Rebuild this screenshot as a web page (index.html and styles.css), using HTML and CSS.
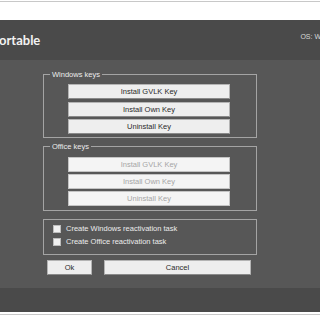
FILE: index.html
```html
<!DOCTYPE html>
<html>
<head>
<meta charset="utf-8">
<link rel="stylesheet" href="styles.css">
</head>
<body>
<div class="topbar"><div class="topline"></div></div>
<div class="header">
  <div class="title">ortable</div>
  <div class="os">OS: W</div>
</div>
<div class="main">
  <div class="group">
    <div class="group-title">Windows keys</div>
    <div class="btns">
      <div class="btn">Install GVLK Key</div>
      <div class="btn">Install Own Key</div>
      <div class="btn">Uninstall Key</div>
    </div>
  </div>
  <div class="group office">
    <div class="group-title">Office keys</div>
    <div class="btns">
      <div class="btn disabled">Install GVLK Key</div>
      <div class="btn disabled">Install Own Key</div>
      <div class="btn disabled">Uninstall Key</div>
    </div>
  </div>
  <div class="group checks">
    <div class="check"><span class="box"></span>Create Windows reactivation task</div>
    <div class="check"><span class="box"></span>Create Office reactivation task</div>
  </div>
  <div class="actions">
    <div class="btn ok">Ok</div>
    <div class="btn cancel">Cancel</div>
  </div>
</div>
<div class="footer"></div>
<div class="bottombar"><div class="bottomline"></div></div>
</body>
</html>
```
FILE: styles.css
```css
html, body {
  margin: 0;
  padding: 0;
  background: #ffffff;
  font-family: "Liberation Sans", Arial, sans-serif;
}
body {
  width: 320px;
  height: 320px;
  overflow: hidden;
}
.topbar {
  height: 20px;
  padding-top: 1px;
  box-sizing: border-box;
  background: #ffffff;
}
.topline {
  height: 1px;
  background: #c8c8c8;
}
.header {
  height: 40px;
  background: #4a4a4a;
  display: flex;
  justify-content: space-between;
  align-items: center;
  overflow: hidden;
}
.title {
  font-family: Lato, "Open Sans", sans-serif;
  font-weight: bold;
  font-size: 13px;
  color: #f2f2f2;
  padding-bottom: 1px;
  margin-left: -1px;
}
.os {
  font-size: 7px;
  color: #d8d8d8;
  white-space: nowrap;
  padding-bottom: 7px;
  margin-right: -1px;
}
.main {
  height: 228px;
  background: #575757;
  padding: 14px 0 0 43px;
  box-sizing: border-box;
}
.group {
  width: 214px;
  box-sizing: border-box;
  border: 1px solid #a4a4a4;
  margin-bottom: 8px;
  line-height: 9px;
}
.group-title {
  display: block;
  width: max-content;
  margin: -5px 0 0 6px;
  padding: 0 2px;
  height: 9px;
  line-height: 9px;
  font-size: 7.5px;
  color: #ececec;
  background: #575757;
}
.btns {
  display: flex;
  flex-direction: column;
  gap: 2.5px;
  padding: 5px 0 3px 24px;
}
.office .btns {
  padding: 6px 0 4px 24px;
  gap: 2px;
}
.btn {
  width: 162px;
  height: 15px;
  box-sizing: border-box;
  background: #eeeeee;
  border: 1px solid #b4b4b4;
  border-bottom-color: #8a8a8a;
  font-size: 7.5px;
  line-height: 13px;
  text-align: center;
  color: #2a2a2a;
}
.btn.disabled {
  background: #f4f4f4;
  color: #a6a6a6;
  border-color: #c4c4c4;
}
.checks {
  height: 36px;
  padding: 5px 0 0 9px;
  display: flex;
  flex-direction: column;
  gap: 5px;
  margin-bottom: 5px;
}
.check {
  display: flex;
  align-items: center;
  gap: 5px;
  font-size: 7.5px;
  color: #ececec;
  height: 8px;
  line-height: 8px;
}
.box {
  width: 8px;
  height: 8px;
  box-sizing: border-box;
  background: #f0f0f0;
  border: 1px solid #bdbdbd;
}
.actions {
  display: flex;
  gap: 12px;
  padding-left: 4px;
}
.btn.ok {
  width: 45px;
}
.btn.cancel {
  width: 147px;
}
.footer {
  height: 24px;
  background: #4a4a4a;
}
.bottombar {
  height: 8px;
  padding-top: 2px;
  box-sizing: border-box;
}
.bottomline {
  height: 1px;
  background: #c8c8c8;
}
```
